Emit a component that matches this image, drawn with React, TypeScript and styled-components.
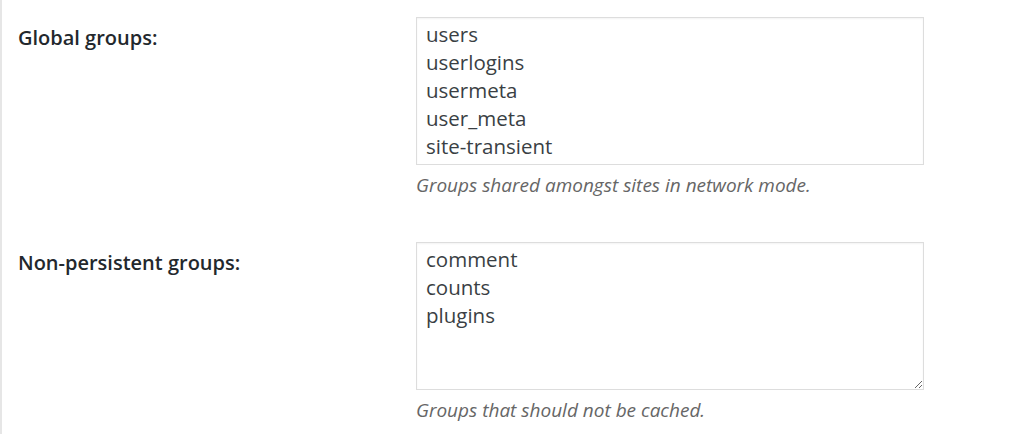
import React from "react";
import styled, { createGlobalStyle } from "styled-components";

const Global = createGlobalStyle`
  html, body { margin: 0; padding: 0; background: #ffffff; }
  body { font-family: "Open Sans", "Noto Sans", sans-serif; }
`;

const Page = styled.div`
  width: 1024px;
  height: 434px;
  box-sizing: border-box;
  border-left: 2px solid #e6e6e6;
  padding: 17px 0 0 16px;
  display: flex;
  flex-direction: column;
  gap: 46px;
  overflow: hidden;
`;

const Row = styled.div`
  display: flex;
  align-items: flex-start;
`;

const Label = styled.label`
  width: 398px;
  flex: none;
  padding-top: 8px;
  font-size: 20px;
  line-height: 26px;
  font-weight: 600;
  color: #23282d;
`;

const Field = styled.div`
  display: flex;
  flex-direction: column;
  gap: 9px;
`;

const Area = styled.textarea<{ $resizable?: boolean }>`
  width: 508px;
  height: 148px;
  box-sizing: border-box;
  margin: 0;
  padding: 2px 9px;
  border: 1px solid #dddddd;
  box-shadow: inset 0 1px 2px rgba(0, 0, 0, 0.05);
  background: #ffffff;
  font-family: "Open Sans", "Noto Sans", sans-serif;
  font-size: 20.5px;
  line-height: 28px;
  color: #3a3f44;
  resize: ${(p) => (p.$resizable ? "both" : "none")};
  overflow: hidden;
  outline: none;
`;

const Desc = styled.p`
  margin: 0;
  font-size: 19px;
  line-height: 22px;
  font-style: italic;
  color: #666666;
`;

export default function App() {
  return (
    <>
      <Global />
      <Page>
        <Row>
          <Label>Global groups:</Label>
          <Field>
            <Area
              readOnly
              defaultValue={"users\nuserlogins\nusermeta\nuser_meta\nsite-transient"}
            />
            <Desc>Groups shared amongst sites in network mode.</Desc>
          </Field>
        </Row>
        <Row>
          <Label>Non-persistent groups:</Label>
          <Field>
            <Area $resizable readOnly defaultValue={"comment\ncounts\nplugins"} />
            <Desc>Groups that should not be cached.</Desc>
          </Field>
        </Row>
      </Page>
    </>
  );
}
